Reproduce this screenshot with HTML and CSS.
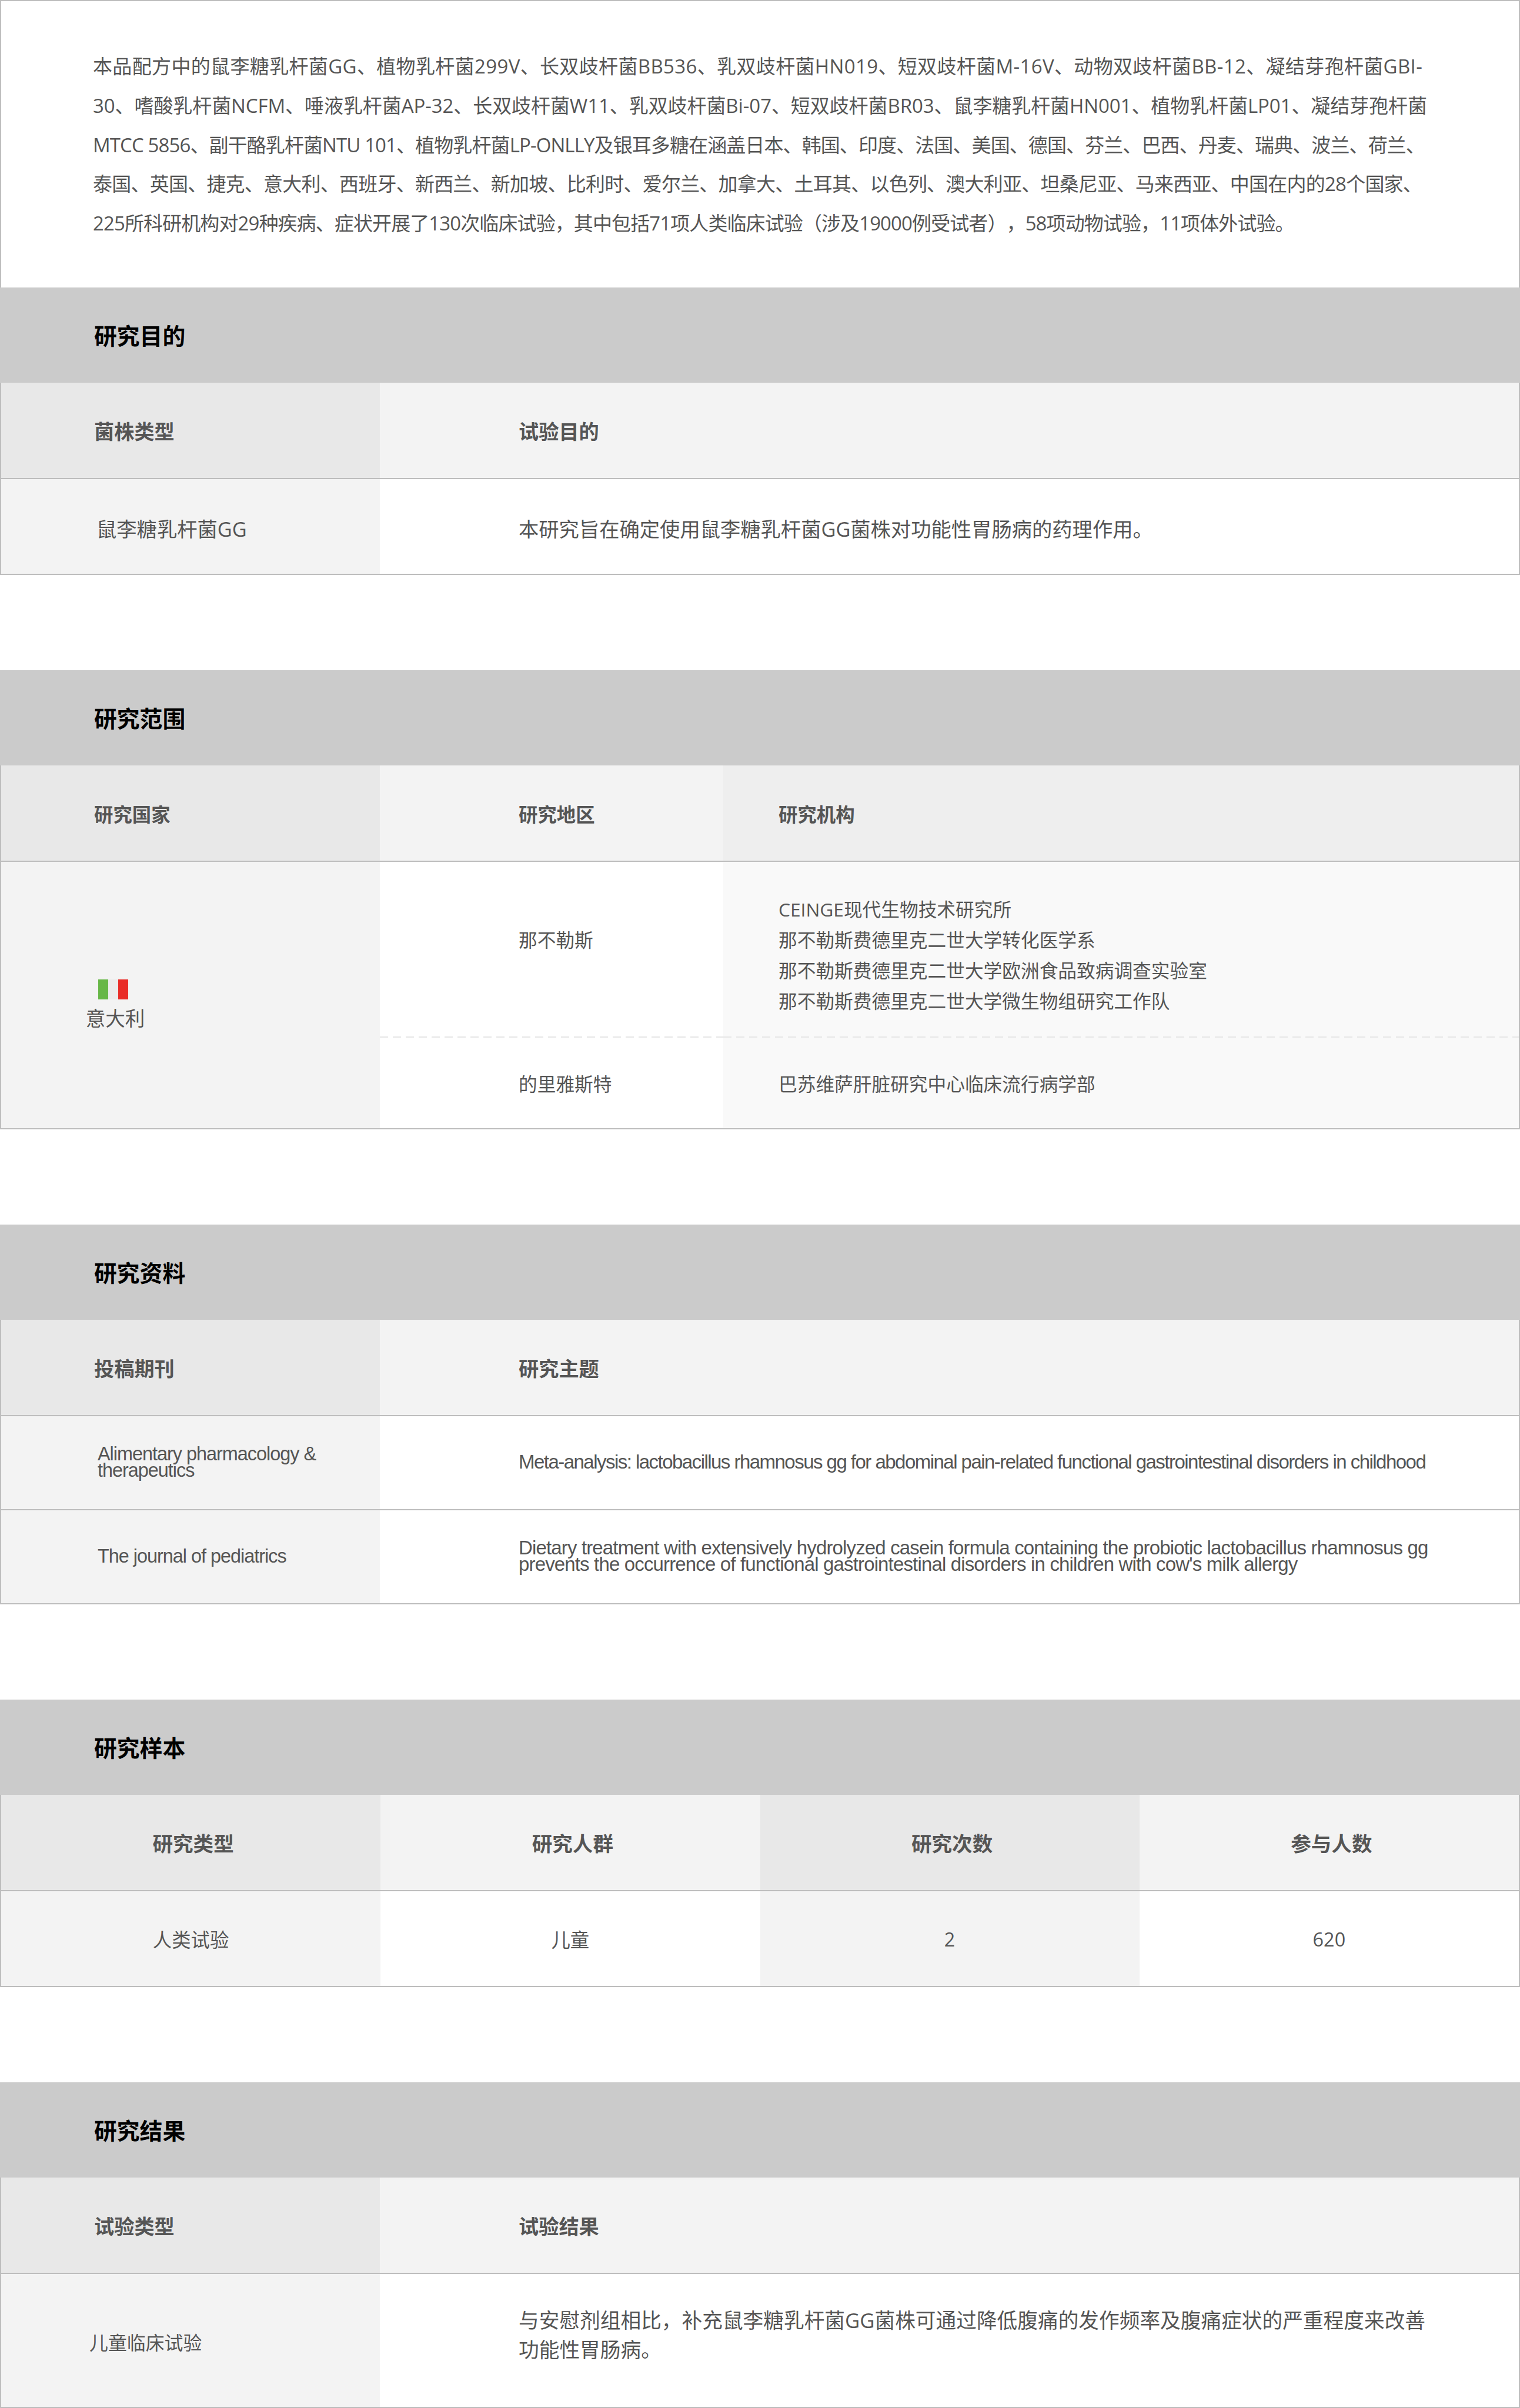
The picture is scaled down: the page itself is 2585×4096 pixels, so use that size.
FILE: index.html
```html
<!DOCTYPE html>
<html lang="zh-CN">
<head>
  <meta charset="UTF-8" />
  <title>研究概述</title>
  <link rel="stylesheet" href="styles.css">
</head>
<body>
  <div class="intro">
    <div class="intro-line fit-wide">本品配方中的鼠李糖乳杆菌GG、植物乳杆菌299V、长双歧杆菌BB536、乳双歧杆菌HN019、短双歧杆菌M-16V、动物双歧杆菌BB-12、凝结芽孢杆菌GBI-</div>
    <div class="intro-line fit-loose">30、嗜酸乳杆菌NCFM、唾液乳杆菌AP-32、长双歧杆菌W11、乳双歧杆菌Bi-07、短双歧杆菌BR03、鼠李糖乳杆菌HN001、植物乳杆菌LP01、凝结芽孢杆菌</div>
    <div class="intro-line fit-tight">MTCC 5856、副干酪乳杆菌NTU 101、植物乳杆菌LP-ONLLY及银耳多糖在涵盖日本、韩国、印度、法国、美国、德国、芬兰、巴西、丹麦、瑞典、波兰、荷兰、</div>
    <div class="intro-line fit-mid">泰国、英国、捷克、意大利、西班牙、新西兰、新加坡、比利时、爱尔兰、加拿大、土耳其、以色列、澳大利亚、坦桑尼亚、马来西亚、中国在内的28个国家、</div>
    <div class="intro-line fit-tight">225所科研机构对29种疾病、症状开展了130次临床试验，其中包括71项人类临床试验（涉及19000例受试者），58项动物试验，11项体外试验。</div>
  </div>

  <section class="block">
    <h2 class="block-title">研究目的</h2>
    <div class="table table-two">
      <div class="cell head shade-a">菌株类型</div>
      <div class="cell head shade-b pad-wide">试验目的</div>
      <div class="cell row row-low shade-b pad-name">鼠李糖乳杆菌GG</div>
      <div class="cell row row-low pad-wide">本研究旨在确定使用鼠李糖乳杆菌GG菌株对功能性胃肠病的药理作用。</div>
    </div>
  </section>

  <section class="block">
    <h2 class="block-title">研究范围</h2>
    <div class="table table-scope">
      <div class="cell head shade-a">研究国家</div>
      <div class="cell head shade-b pad-wide">研究地区</div>
      <div class="cell head shade-c pad-mid">研究机构</div>
      <div class="cell country shade-b">
        <div class="country-inner">
          <svg class="flag" viewBox="0 0 51 34">
            <rect width="17" height="34" fill="#67b747" />
            <rect x="17" width="17" height="34" fill="#ececec" />
            <rect x="34" width="17" height="34" fill="#e92c27" />
          </svg>
          <span>意大利</span>
        </div>
      </div>
      <div class="cell region region-top pad-wide"><span class="region-name">那不勒斯</span></div>
      <div class="cell region region-top pad-mid shade-d">
        <div class="org-list">
          <div>CEINGE现代生物技术研究所</div>
          <div>那不勒斯费德里克二世大学转化医学系</div>
          <div>那不勒斯费德里克二世大学欧洲食品致病调查实验室</div>
          <div>那不勒斯费德里克二世大学微生物组研究工作队</div>
        </div>
      </div>
      <div class="cell region region-end pad-wide">的里雅斯特</div>
      <div class="cell region region-end pad-mid shade-d">巴苏维萨肝脏研究中心临床流行病学部</div>
    </div>
  </section>

  <section class="block">
    <h2 class="block-title">研究资料</h2>
    <div class="table table-two">
      <div class="cell head shade-a">投稿期刊</div>
      <div class="cell head shade-b pad-wide">研究主题</div>
      <div class="cell row row-paper shade-b pad-paper latin">Alimentary pharmacology &amp; therapeutics</div>
      <div class="cell row row-paper pad-wide latin latin-wide latin-tight">Meta-analysis: lactobacillus rhamnosus gg for abdominal pain-related functional gastrointestinal disorders in childhood</div>
      <div class="cell row row-paper shade-b pad-paper latin">The journal of pediatrics</div>
      <div class="cell row row-paper pad-wide latin latin-wide">Dietary treatment with extensively hydrolyzed casein formula containing the probiotic lactobacillus rhamnosus gg prevents the occurrence of functional gastrointestinal disorders in children with cow's milk allergy</div>
    </div>
  </section>

  <section class="block">
    <h2 class="block-title">研究样本</h2>
    <div class="table table-four">
      <div class="cell head shade-a center">研究类型</div>
      <div class="cell head shade-b center">研究人群</div>
      <div class="cell head shade-a center">研究次数</div>
      <div class="cell head shade-b center">参与人数</div>
      <div class="cell row shade-b center">人类试验</div>
      <div class="cell row center">儿童</div>
      <div class="cell row shade-b center">2</div>
      <div class="cell row center">620</div>
    </div>
  </section>

  <section class="block">
    <h2 class="block-title">研究结果</h2>
    <div class="table table-two">
      <div class="cell head shade-a">试验类型</div>
      <div class="cell head shade-b pad-wide">试验结果</div>
      <div class="cell row-tall shade-b pad-result">儿童临床试验</div>
      <div class="cell row-tall pad-wide result-text">与安慰剂组相比，补充鼠李糖乳杆菌GG菌株可通过降低腹痛的发作频率及腹痛症状的严重程度来改善功能性胃肠病。</div>
    </div>
  </section>
</body>
</html>
```

FILE: styles.css
```css
:root {
  --line: #bdbdbd;
  --title-height: 162px;
  --head-height: 164px;
  --row-height: 163px;
}

* {
  box-sizing: border-box;
}

body {
  margin: 0;
  background: #ffffff;
  color: #555;
  font-family: "Open Sans", "Noto Sans CJK SC", sans-serif;
  text-spacing-trim: space-all;
}

.intro {
  height: 489px;
  padding: 78px 100px 0 156px;
  border: solid var(--line);
  border-width: 2px 2px 0 2px;
  font-size: 33px;
  line-height: 66.8px;
}

.intro-line {
  white-space: nowrap;
}

.fit-wide {
  letter-spacing: 0.35px;
}

.fit-loose {
  letter-spacing: -0.08px;
}

.fit-mid {
  letter-spacing: -0.77px;
}

.fit-tight {
  letter-spacing: -0.9px;
}

.block {
  margin-bottom: 162px;
}

.block:last-child {
  margin-bottom: 0;
}

.block-title {
  display: flex;
  align-items: center;
  height: var(--title-height);
  margin: 0;
  padding-left: 160px;
  padding-bottom: 2px;
  background: #cbcbcb;
  color: #000;
  font-size: 38.8px;
  font-weight: 700;
}

.table {
  display: grid;
  border-left: 2px solid var(--line);
  border-right: 2px solid var(--line);
}

.table-two {
  grid-template-columns: 644px 1fr;
}

.table-scope {
  grid-template-columns: 644px 584px 1fr;
}

.table-four {
  grid-template-columns: repeat(4, 1fr);
}

.cell {
  display: flex;
  align-items: center;
  padding-left: 158px;
  font-size: 33.6px;
  border-bottom: 2px solid var(--line);
}

.head {
  height: var(--head-height);
  font-size: 34.2px;
  font-weight: 700;
}

.table-scope .head {
  font-size: 32.4px;
}

.table-four .head {
  font-size: 34.6px;
  padding-left: 8px;
}

.row {
  height: var(--row-height);
}

.table-four .row {
  font-size: 32.4px;
}

.row-low {
  font-size: 34.3px;
  padding-top: 5px;
}

.row-paper {
  height: 160px;
  padding-bottom: 3px;
}

.row-tall {
  height: 228px;
  font-size: 31.9px;
  padding-top: 3px;
}

.shade-a {
  background: #e8e8e8;
}

.shade-b {
  background: #f3f3f3;
}

.shade-c {
  background: #eeeeee;
}

.shade-d {
  background: #f9f9f9;
}

.pad-wide {
  padding-left: 236px;
  padding-right: 156px;
}

.pad-mid {
  padding-left: 94px;
}

.pad-name {
  padding-left: 162px;
}

.pad-paper {
  padding-left: 164px;
  padding-right: 90px;
}

.pad-result {
  padding-left: 150px;
}

.center {
  justify-content: center;
  padding-left: 0;
}

.latin {
  font-family: "Liberation Sans", sans-serif;
  font-size: 32.4px;
  line-height: 28px;
  letter-spacing: -1px;
}

.latin-wide {
  font-size: 33px;
  letter-spacing: -0.85px;
  padding-right: 150px;
}

.latin-tight {
  letter-spacing: -1.53px;
  white-space: nowrap;
}

.result-text {
  font-size: 34.7px;
  line-height: 50px;
  padding-top: 0;
  padding-right: 148px;
  padding-bottom: 18px;
}

.country {
  grid-row: span 2;
  padding-left: 144px;
}

.country-inner {
  display: flex;
  flex-direction: column;
  align-items: center;
  gap: 9px;
  width: 100px;
  line-height: 46px;
  margin-top: 35px;
  white-space: nowrap;
}

.flag {
  display: block;
  width: 51px;
  height: 34px;
  margin-right: 8px;
}

.region {
  font-size: 31.7px;
}

.region-top {
  height: 299px;
  border-bottom: none;
  background-image: repeating-linear-gradient(90deg, #e6e6e6 0 14px, transparent 14px 22px);
  background-size: 100% 2px;
  background-position: bottom;
  background-repeat: no-repeat;
}

.region-name {
  margin-bottom: 37px;
}

.region-end {
  height: 156px;
}

.org-list {
  line-height: 52px;
  margin-top: 18px;
}
```
